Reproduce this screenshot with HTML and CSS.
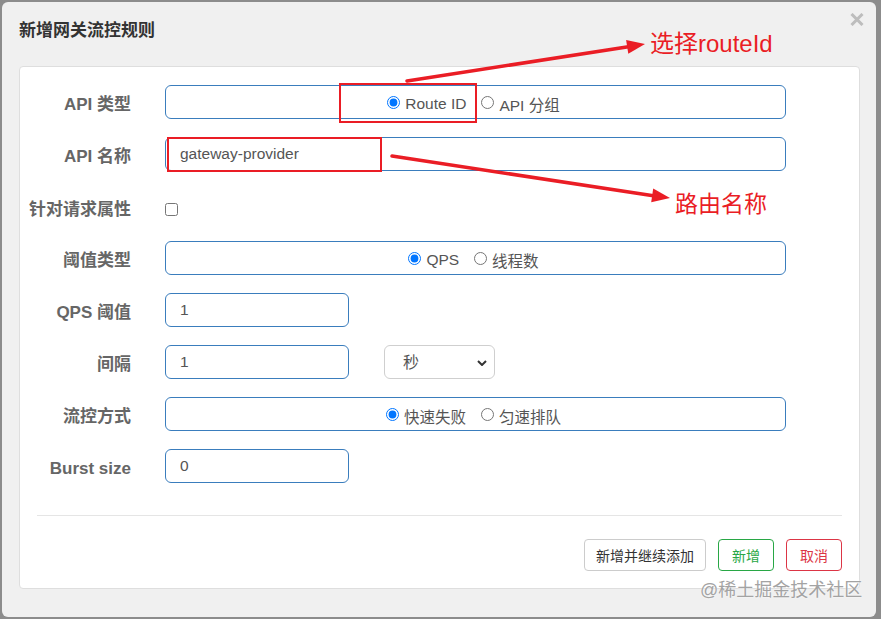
FILE: index.html
```html
<!DOCTYPE html>
<html lang="zh-CN">
<head>
  <meta charset="UTF-8">
  <meta name="viewport" content="width=device-width, initial-scale=1.0">
  <title>新增网关流控规则</title>
  <link rel="stylesheet" href="styles.css">
</head>
<body>

  <div class="modal">
    <div class="modal-header">
      <h4 class="modal-title">新增网关流控规则</h4>
      <button class="close-btn" type="button" aria-label="关闭">
        <svg width="14" height="13" viewBox="0 0 14 13"><path d="M1.5 1 L12.5 12 M12.5 1 L1.5 12" stroke="#bdbdbd" stroke-width="3" fill="none"/></svg>
      </button>
    </div>

    <div class="card">
      <form class="form-grid">
        <label class="form-label">API 类型</label>
        <div class="radio-box">
          <label class="radio"><input type="radio" name="resourceMode" checked>Route ID</label>
          <label class="radio"><input type="radio" name="resourceMode">API 分组</label>
        </div>

        <label class="form-label">API 名称</label>
        <input type="text" class="form-input" value="gateway-provider">

        <label class="form-label check-cell">针对请求属性</label>
        <div class="check-cell"><input type="checkbox" class="checkbox"></div>

        <label class="form-label">阈值类型</label>
        <div class="radio-box">
          <label class="radio"><input type="radio" name="grade" checked>QPS</label>
          <label class="radio"><input type="radio" name="grade">线程数</label>
        </div>

        <label class="form-label">QPS 阈值</label>
        <input type="text" class="form-input short" value="1">

        <label class="form-label">间隔</label>
        <div class="inline-controls">
          <input type="text" class="form-input short" value="1">
          <div class="select-wrap">
            <select class="form-select">
              <option>秒</option>
              <option>分</option>
              <option>时</option>
              <option>天</option>
            </select>
            <svg class="chevron" width="10" height="6" viewBox="0 0 10 6"><path d="M1 1 L5 5 L9 1" stroke="#333" stroke-width="2" fill="none"/></svg>
          </div>
        </div>

        <label class="form-label">流控方式</label>
        <div class="radio-box">
          <label class="radio"><input type="radio" name="behavior" checked>快速失败</label>
          <label class="radio"><input type="radio" name="behavior">匀速排队</label>
        </div>

        <label class="form-label">Burst size</label>
        <input type="text" class="form-input short" value="0">
      </form>

      <hr class="divider">

      <div class="btn-row">
        <button type="button" class="btn btn-default">新增并继续添加</button>
        <button type="button" class="btn btn-success">新增</button>
        <button type="button" class="btn btn-danger">取消</button>
      </div>
    </div>
  </div>

  <div class="watermark">@稀土掘金技术社区</div>

  <!-- screenshot annotations -->
  <svg class="annotations" width="881" height="619" viewBox="0 0 881 619">
    <rect x="340" y="84" width="136" height="38" stroke="#ea1d25" stroke-width="2" fill="none"/>
    <rect x="168" y="138" width="213" height="33" stroke="#ea1d25" stroke-width="2" fill="none"/>
    <line x1="407" y1="81" x2="630" y2="46.5" stroke="#ea1d25" stroke-width="3.5" stroke-linecap="round"/>
    <polygon points="645,44 628.3,53.7 626.1,39.9" fill="#ea1d25"/>
    <line x1="392" y1="156" x2="655" y2="196" stroke="#ea1d25" stroke-width="3.5" stroke-linecap="round"/>
    <polygon points="670,198 651.2,202.2 653.2,188.4" fill="#ea1d25"/>
    <text x="650" y="52" class="note">选择routeId</text>
    <text x="675" y="212" class="note note-small">路由名称</text>
  </svg>

</body>
</html>
```

FILE: styles.css
```css
body {
  font-family: "Liberation Sans", "Noto Sans CJK SC", sans-serif;
  background-color: #8c8c8c;
  margin: 0;
  padding: 0;
  width: 881px;
  height: 619px;
  overflow: hidden;
  position: relative;
}

.modal {
  box-sizing: border-box;
  width: 874px;
  height: 615px;
  margin: 2px 0 0 2px;
  padding: 17px 16px 0 17px;
  background-color: #f0f0f0;
  border-radius: 6px;
}

.modal-header {
  display: flex;
  justify-content: space-between;
  align-items: flex-start;
  height: 47px;
}

.modal-title {
  margin: 0;
  font-size: 17px;
  line-height: 24px;
  font-weight: bold;
  color: #333;
}

.close-btn {
  border: none;
  background: none;
  padding: 0;
  margin: -6px -4px 0 0;
  cursor: pointer;
}

.card {
  box-sizing: border-box;
  width: 841px;
  height: 523px;
  background-color: white;
  border: 1px solid #dedede;
  border-radius: 4px;
  padding: 18px 17px 17px 0;
}

.form-grid {
  display: grid;
  grid-template-columns: 111px 621px;
  column-gap: 34px;
  row-gap: 18px;
  grid-auto-rows: 34px;
  margin: 0;
}

.form-label {
  box-sizing: border-box;
  padding-top: 3px;
  font-size: 17px;
  font-weight: bold;
  color: #666;
  text-align: right;
  line-height: 34px;
  white-space: nowrap;
}

.check-cell {
  box-sizing: border-box;
  height: 33px;
  padding-top: 7px;
  line-height: 26px;
}

.form-label.check-cell {
  padding-top: 8px;
}

.checkbox {
  margin: 0;
  width: 13px;
  height: 13px;
  vertical-align: middle;
}

.form-input,
.radio-box {
  box-sizing: border-box;
  height: 34px;
  border: 1px solid #3a7dbd;
  border-radius: 6px;
  background-color: white;
}

.form-input {
  width: 621px;
  padding: 0 14px;
  font-family: inherit;
  font-size: 15.5px;
  color: #555;
  outline: none;
}

.form-input.short {
  width: 184px;
}

.radio-box {
  display: flex;
  justify-content: center;
  align-items: center;
  padding-right: 4px;
  font-size: 15.5px;
  color: #555;
}

.radio {
  display: inline-flex;
  align-items: center;
  margin-left: 15px;
  margin-top: 3px;
}

.radio:first-child {
  margin-left: 0;
}

.radio input {
  width: 13px;
  height: 13px;
  margin: -3px 5px 0 0;
}

.inline-controls {
  display: flex;
  align-items: center;
  gap: 35px;
}

.select-wrap {
  position: relative;
  width: 111px;
  height: 34px;
}

.form-select {
  box-sizing: border-box;
  width: 111px;
  height: 34px;
  padding: 0 0 0 18px;
  border: 1px solid #cfcfcf;
  border-radius: 6px;
  background-color: white;
  font-family: inherit;
  font-size: 16px;
  color: #555;
  appearance: none;
  -webkit-appearance: none;
  outline: none;
}

.chevron {
  position: absolute;
  right: 8px;
  top: 15px;
  pointer-events: none;
}

.divider {
  border: none;
  border-top: 1px solid #e5e5e5;
  margin: 32px 0 23px 17px;
}

.btn-row {
  display: flex;
  justify-content: flex-end;
  gap: 12px;
}

.btn {
  box-sizing: border-box;
  height: 32px;
  padding: 0 13px;
  background-color: white;
  border: 1px solid #ccc;
  border-radius: 4px;
  font-family: inherit;
  font-size: 14px;
  color: #333;
  cursor: pointer;
}

.btn-default {
  padding: 0 11px;
}

.btn-success {
  border-color: #28a745;
  color: #28a745;
}

.btn-danger {
  border-color: #dc3545;
  color: #dc3545;
}

.watermark {
  position: absolute;
  left: 700px;
  top: 579px;
  font-size: 18px;
  line-height: 22px;
  color: #a3a3a3;
  text-shadow: 0 0 2px #fff;
  white-space: nowrap;
}

.annotations {
  position: absolute;
  left: 0;
  top: 0;
  pointer-events: none;
}

.note {
  font-family: "Liberation Sans", "Noto Sans CJK SC", sans-serif;
  font-size: 24px;
  fill: #ea1d25;
}

.note-small {
  font-size: 23px;
}
```
